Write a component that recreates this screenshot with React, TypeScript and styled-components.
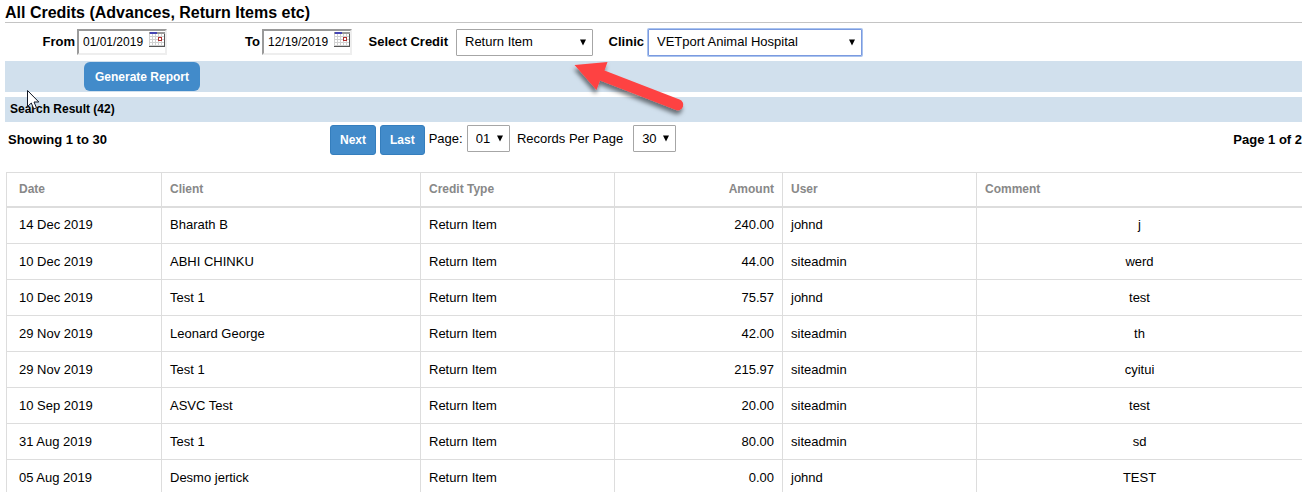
import React from "react";
import styled, { createGlobalStyle, css } from "styled-components";

const GlobalStyle = createGlobalStyle`
  * { box-sizing: border-box; }
  html { scrollbar-width: none; }
  body {
    margin: 0;
    background: #fff;
    color: #000;
    font: 14px/20px "Liberation Sans", Arial, sans-serif;
  }
  button, input, select { font: inherit; color: inherit; }
`;

const Page = styled.main`
  position: relative;
  padding: 2px 0 0 5px;
  overflow: hidden;
`;

const Title = styled.h1`
  margin: 0;
  height: 21px;
  font-size: 16px;
  line-height: 21px;
  border-bottom: 1px solid #c4c4c4;
`;

const Filters = styled.form`
  display: flex;
  align-items: center;
  height: 38px;
`;

const Field = styled.div<{ $labelWidth: number }>`
  display: flex;
  align-items: center;
  label {
    width: ${(p) => p.$labelWidth}px;
    padding-right: 2px;
    text-align: right;
    font-size: 13px;
    font-weight: bold;
    white-space: nowrap;
  }
`;

const DateBox = styled.span`
  display: flex;
  width: 90px;
  height: 26px;
  padding-left: 4px;
  background: #fff;
  border: 2px solid;
  border-color: #9a9a9a #eee #eee #9a9a9a;
`;

const DateInput = styled.input`
  width: 66px;
  padding: 0;
  border: 0;
  outline: 0;
  background: transparent;
  font-size: 12px;
`;

const CalendarButton = styled.button`
  width: 16px;
  height: 16px;
  padding: 0;
  border: 0;
  background: none;
  svg { display: block; }
`;

const SelectBox = styled.span<{ $width: number; $left?: number; $active?: boolean }>`
  position: relative;
  display: block;
  width: ${(p) => p.$width}px;
  margin-left: ${(p) => p.$left ?? 0}px;
  select {
    display: block;
    width: 100%;
    height: 27px;
    padding: 0 8px;
    appearance: none;
    background: #fff;
    border: 1px solid #a6a6a6;
    border-radius: 1px;
    outline: 0;
    font-size: 13px;
    ${(p) => p.$active && css`border-color: #7b9ae0; box-shadow: 0 0 0 1px #a9c3ee;`}
  }
  svg {
    position: absolute;
    right: 7px;
    top: 10px;
    pointer-events: none;
  }
`;

const Bar = styled.div`
  display: flex;
  align-items: center;
  height: 31px;
  padding-left: 79px;
  background: #d1e0ed;
`;

const ResultBar = styled.h2`
  margin: 5px 0 0;
  padding-left: 5px;
  background: #d1e0ed;
  font-size: 12px;
  line-height: 25px;
`;

const GenerateButton = styled.button`
  height: 29px;
  padding: 0 11px;
  border: 0;
  border-radius: 6px;
  background: #428bca;
  color: #fff;
  font-size: 12px;
  font-weight: bold;
`;

const Pager = styled.nav`
  display: flex;
  align-items: flex-start;
  height: 50px;
  padding: 3px 0 0 3px;
  font-size: 13px;
  strong { line-height: 30px; white-space: nowrap; }
  strong:first-child { width: 322px; }
  strong:last-child { margin-left: auto; }
  label { line-height: 27px; white-space: nowrap; }
`;

const PageButton = styled.button`
  height: 30px;
  margin-right: 4px;
  padding: 0 9px;
  border: 1px solid #357ebd;
  border-radius: 3px;
  background: #428bca;
  color: #fff;
  font-size: 12px;
  font-weight: bold;
`;

const Table = styled.table`
  width: calc(100% - 1px);
  margin-left: 1px;
  table-layout: fixed;
  border-collapse: collapse;
  border: 1px solid #ddd;
  border-right: 0;
  font-size: 13px;
  th, td {
    height: 36px;
    padding: 0 8px;
    border: 1px solid #ddd;
    border-right: 0;
    text-align: left;
    white-space: nowrap;
  }
  th {
    height: 34px;
    border-bottom-width: 2px;
    color: #888;
    font-size: 12px;
  }
  tbody tr:first-child td { height: 37px; }
  th:first-child, td:first-child { padding-left: 12px; }
  th:nth-child(4), td:nth-child(4) { text-align: right; }
  td:last-child { text-align: center; }
`;

const Col = styled.col<{ $width?: number }>`
  width: ${(p) => (p.$width ? `${p.$width}px` : "auto")};
`;

const Overlay = styled.svg<{ $x: number; $y: number }>`
  position: absolute;
  left: ${(p) => p.$x}px;
  top: ${(p) => p.$y}px;
  pointer-events: none;
`;

const Caret = () => (
  <svg width="6" height="7" viewBox="0 0 6 7" aria-hidden="true">
    <path d="M0 0.5H6L3 6.5Z" fill="#000" />
  </svg>
);

const CalendarIcon = () => (
  <svg width="16" height="15" viewBox="0 1 16 15" shapeRendering="crispEdges" aria-hidden="true">
    <path d="M0 1H16V16H0Z" fill="#d0d0d0" />
    <path d="M1 3h2v2H1zM4 3h2v2H4zM7 3h2v2H7zM10 3h2v2h-2zM13 3h2v2h-2zM1 6h2v2H1zM4 6h2v2H4zM7 6h2v2H7zM13 6h2v2h-2zM1 9h2v2H1zM4 9h2v2H4zM7 9h2v2H7zM10 9h2v2h-2zM13 9h2v2h-2zM1 12h2v2H1zM4 12h2v2H4zM7 12h2v2H7zM10 12h2v2h-2zM13 12h2v2h-2z" fill="#fff" />
    <path d="M0 1H16V3H0Z" fill="#999" />
    <path d="M1 1H8V3H1Z" fill="#4646b4" />
    <path d="M15 3H16V16H0V15H15Z" fill="#555" />
    <rect x="9.5" y="6.5" width="3" height="3" fill="#fff" stroke="#b03030" />
  </svg>
);

const DateField = ({ id, label, value, labelWidth }: { id: string; label: string; value: string; labelWidth: number }) => (
  <Field $labelWidth={labelWidth}>
    <label htmlFor={id}>{label}</label>
    <DateBox>
      <DateInput id={id} defaultValue={value} />
      <CalendarButton type="button" aria-label={`Choose ${label} date`}>
        <CalendarIcon />
      </CalendarButton>
    </DateBox>
  </Field>
);

type DropProps = { id: string; value: string; width: number; left?: number; active?: boolean };
const DropDown = ({ id, value, width, left, active }: DropProps) => (
  <SelectBox $width={width} $left={left} $active={active}>
    <select id={id} defaultValue={value}>
      <option>{value}</option>
    </select>
    <Caret />
  </SelectBox>
);

const rows = [
  ["14 Dec 2019", "Bharath B", "Return Item", "240.00", "johnd", "j"],
  ["10 Dec 2019", "ABHI CHINKU", "Return Item", "44.00", "siteadmin", "werd"],
  ["10 Dec 2019", "Test 1", "Return Item", "75.57", "johnd", "test"],
  ["29 Nov 2019", "Leonard George", "Return Item", "42.00", "siteadmin", "th"],
  ["29 Nov 2019", "Test 1", "Return Item", "215.97", "siteadmin", "cyitui"],
  ["10 Sep 2019", "ASVC Test", "Return Item", "20.00", "siteadmin", "test"],
  ["31 Aug 2019", "Test 1", "Return Item", "80.00", "siteadmin", "sd"],
  ["05 Aug 2019", "Desmo jertick", "Return Item", "0.00", "johnd", "TEST"],
];

export default function App() {
  return (
    <>
      <GlobalStyle />
      <Page>
        <Title>All Credits (Advances, Return Items etc)</Title>
        <Filters>
          <DateField id="from" label="From" value="01/01/2019" labelWidth={72} />
          <DateField id="to" label="To" value="12/19/2019" labelWidth={95} />
          <Field $labelWidth={98}>
            <label htmlFor="credit">Select Credit</label>
            <DropDown id="credit" value="Return Item" width={137} left={6} />
          </Field>
          <Field $labelWidth={53}>
            <label htmlFor="clinic">Clinic</label>
            <DropDown id="clinic" value="VETport Animal Hospital" width={214} left={2} active />
          </Field>
        </Filters>
        <Bar>
          <GenerateButton type="button">Generate Report</GenerateButton>
        </Bar>
        <ResultBar>Search Result (42)</ResultBar>
        <Pager>
          <strong>Showing 1 to 30</strong>
          <PageButton type="button">Next</PageButton>
          <PageButton type="button">Last</PageButton>
          <label htmlFor="page">Page:</label>
          <DropDown id="page" value="01" width={43} left={4} />
          <label htmlFor="size">&nbsp; Records Per Page</label>
          <DropDown id="size" value="30" width={43} left={10} />
          <strong>Page 1 of 2</strong>
        </Pager>
        <Table>
          <colgroup>
            <Col $width={155} />
            <Col $width={259} />
            <Col $width={194} />
            <Col $width={168} />
            <Col $width={194} />
            <Col />
          </colgroup>
          <thead>
            <tr>
              {["Date", "Client", "Credit Type", "Amount", "User", "Comment"].map((name) => (
                <th key={name} scope="col">{name}</th>
              ))}
            </tr>
          </thead>
          <tbody>
            {rows.map((row, i) => (
              <tr key={i}>
                {row.map((cell, j) => (
                  <td key={j}>{cell}</td>
                ))}
              </tr>
            ))}
          </tbody>
        </Table>
        <Overlay $x={564} $y={52} width="130" height="70" viewBox="564 52 130 70" aria-hidden="true">
          <defs>
            <filter id="arrow-shadow" x="-20%" y="-20%" width="140%" height="160%">
              <feDropShadow dx="-1" dy="4" stdDeviation="2" floodColor="#000" floodOpacity="0.5" />
            </filter>
          </defs>
          <path
            d="M574.5 65L607.5 62L604.5 70.5L679.5 99.5A5.4 5.4 0 0 1 676 110L600 80.5L596.5 90Z"
            fill="#fe4343"
            filter="url(#arrow-shadow)"
          />
        </Overlay>
        <Overlay $x={26} $y={88} width="16" height="24" viewBox="26 88 16 24" aria-hidden="true">
          <path
            d="M27.5 90.5V106.5L31.3 103L33.8 109L36.5 107.8L34 102H38.8Z"
            fill="#fff"
            stroke="#111827"
          />
        </Overlay>
      </Page>
    </>
  );
}
